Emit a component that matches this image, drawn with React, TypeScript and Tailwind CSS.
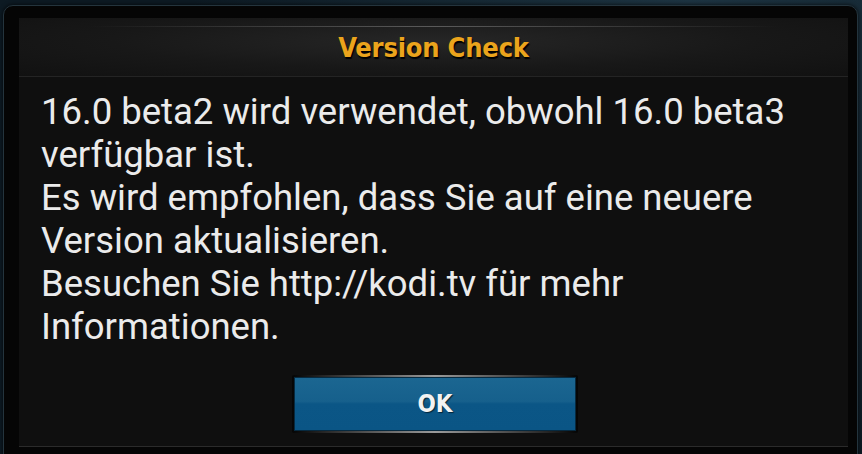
export default function App() {
  return (
    <div className="w-[862px] h-[454px] overflow-hidden bg-[#0f1d27] bg-[radial-gradient(circle_at_80%_0%,#1d3442_0%,#0d1a23_60%)] pt-[5px] pl-[3px] pr-[4px]">
      <div className="h-[470px] rounded-t-[10px] border border-[#24343d] bg-[#050505] pl-[15px] pr-[9px] pt-[12px] shadow-[0_0_4px_rgba(0,0,0,0.8)]">
        <div className="h-[429px] bg-[#0f0f0f] border-b border-[#2b2b2b] flex flex-col">
          <DialogHeader title="Version Check" />
          <div className="pl-[22px] pt-[13px] font-['Roboto',sans-serif] text-[36.5px] leading-[43px] text-[#ebebeb] w-[800px]">
            <p>16.0 beta2 wird verwendet, obwohl 16.0 beta3 verfügbar ist.</p>
            <p>Es wird empfohlen, dass Sie auf eine neuere Version aktualisieren.</p>
            <p>Besuchen Sie http://kodi.tv für mehr Informationen.</p>
          </div>
          <div className="flex justify-center mt-[27px] pl-[3px]">
            <OkButton />
          </div>
        </div>
      </div>
    </div>
  );
}

function DialogHeader({ title }: { title: string }) {
  return (
    <div className="relative h-[59px] border-b border-[#242424] bg-[radial-gradient(ellipse_at_50%_40%,#262626_0%,#181818_55%,#111111_100%)] flex items-center justify-center">
      <div className="absolute top-[8px] left-[70px] right-[70px] h-px bg-gradient-to-r from-transparent via-[#5a5a5a] to-transparent" />
      <h1 className="mt-[2px] font-['DejaVu_Sans_Condensed','DejaVu_Sans',sans-serif] [font-stretch:condensed] font-bold text-[27px] tracking-[-0.2px] text-[#eba41c] [text-shadow:1px_2px_1px_#000]">
        {title}
      </h1>
    </div>
  );
}

function OkButton() {
  return (
    <div className="w-[286px] h-[58px] rounded-[2px] bg-[#030303] p-[2px] bg-[linear-gradient(to_right,#050505_0%,#9a9a9a_50%,#050505_100%)]">
      <button className="w-full h-full bg-[linear-gradient(to_bottom,#1b6691_0%,#16608c_45%,#0b5686_50%,#0a5585_100%)] border border-[#072a40] flex items-center justify-center">
        <span className="font-['DejaVu_Sans_Condensed','DejaVu_Sans',sans-serif] [font-stretch:condensed] font-bold text-[24px] text-[#f2f2f2] [text-shadow:1px_1px_1px_#03263b]">
          OK
        </span>
      </button>
    </div>
  );
}
